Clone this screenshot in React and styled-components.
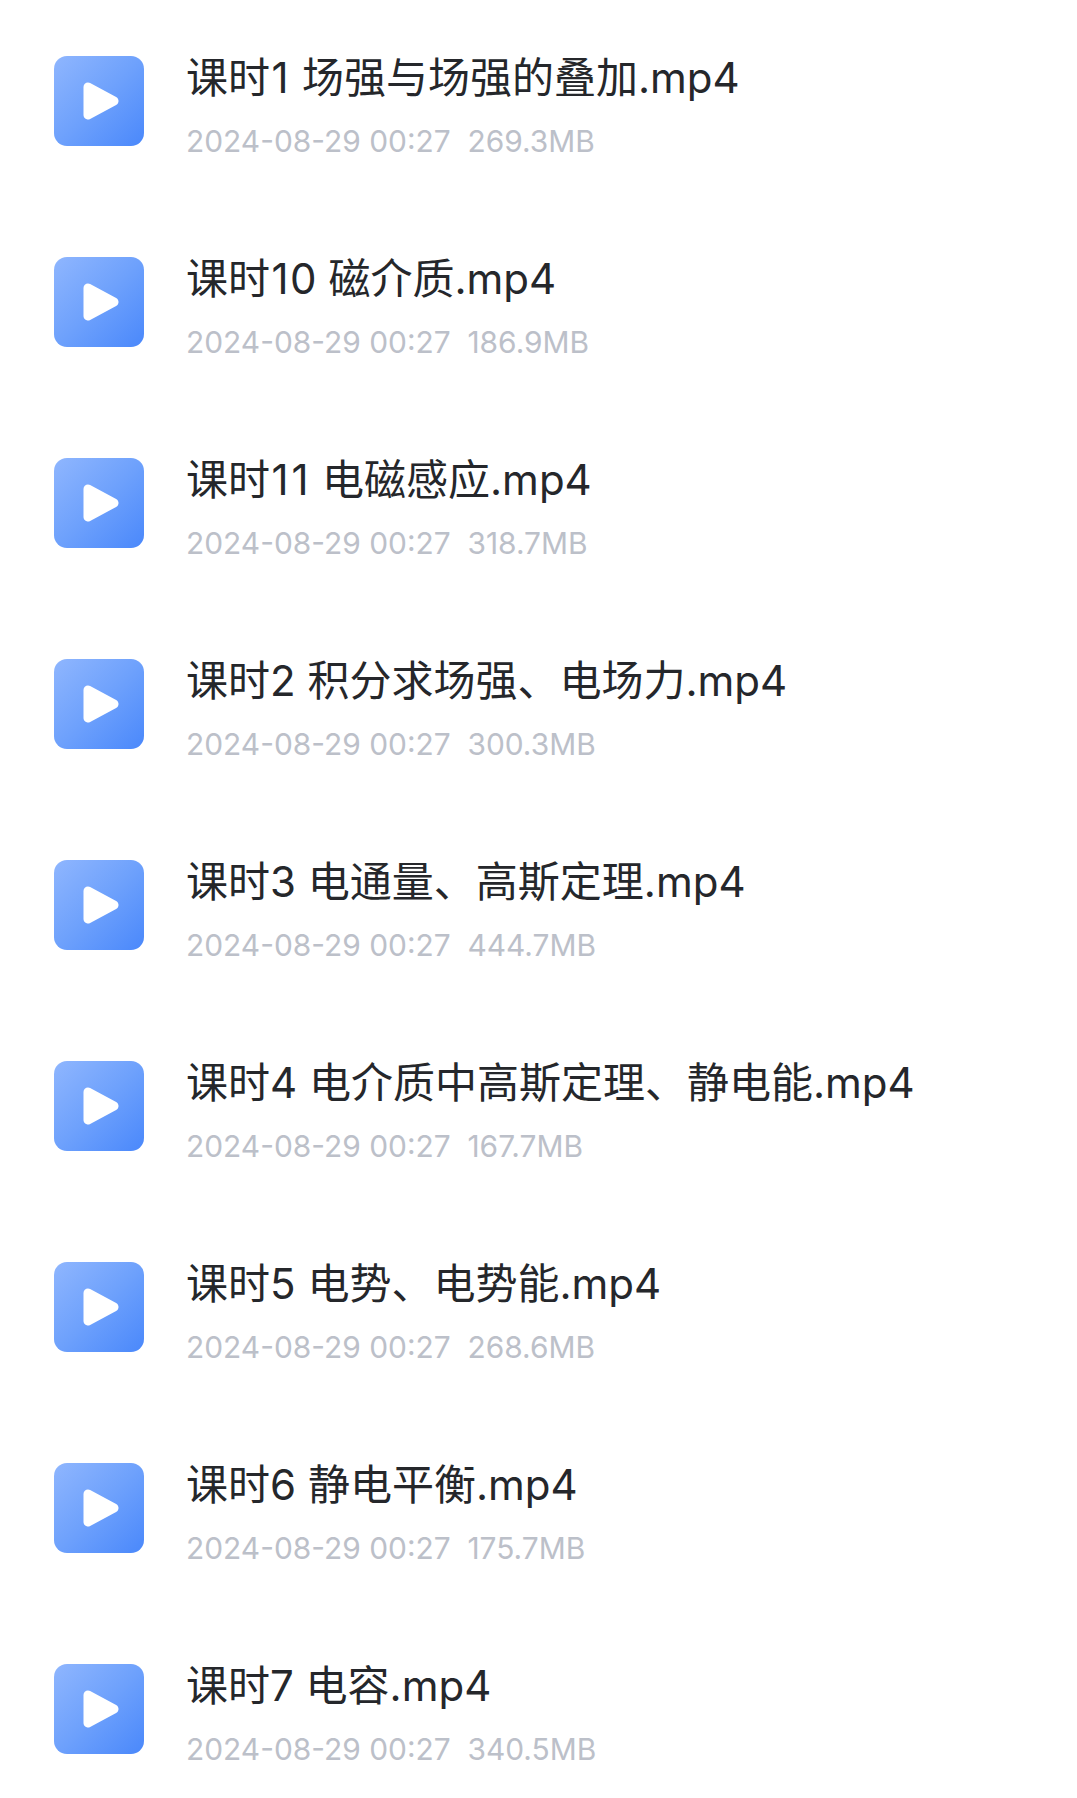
import React from 'react';
import styled, { createGlobalStyle } from 'styled-components';

const GlobalStyle = createGlobalStyle`
  html, body {
    margin: 0;
    padding: 0;
    background: #fff;
  }
`;

const List = styled.div`
  width: 1077px;
  height: 1798px;
  overflow: hidden;
  padding: 56px 0 0 54px;
  box-sizing: border-box;
  display: flex;
  flex-direction: column;
  gap: 111px;
`;

const Row = styled.div`
  display: flex;
  align-items: flex-start;
  gap: 42px;
  height: 90px;
`;

const IconBox = styled.div`
  width: 90px;
  height: 90px;
  border-radius: 13px;
  background: linear-gradient(135deg, #8fb6fe 0%, #6ea1fc 50%, #4a88fb 100%);
  display: flex;
  align-items: center;
  justify-content: center;
  flex-shrink: 0;
`;

const Info = styled.div`
  display: flex;
  flex-direction: column;
  gap: 20px;
  margin-top: -3px;
`;

const Title = styled.div`
  font-family: Inter, "Noto Sans CJK SC", sans-serif;
  font-size: 42px;
  line-height: 50px;
  color: #25272b;
  white-space: pre;
`;

/* Inter's 1 is narrower than the one in the screenshot */
const One = styled.span`
  padding: 0 1.5px;
`;

const Meta = styled.div`
  font-family: Inter, "Noto Sans", sans-serif;
  font-size: 29.9px;
  line-height: 36px;
  color: #bcc0c9;
  white-space: pre;
`;

const PlayIcon = () => (
  <svg width="36" height="38" viewBox="0 0 36 38" style={{ marginLeft: 3 }}>
    <path
      d="M5 5 L31 19 L5 33 Z"
      fill="#fff"
      stroke="#fff"
      strokeWidth="9"
      strokeLinejoin="round"
    />
  </svg>
);

const files = [
  ['课时', '1', ' 场强与场强的叠加.mp4', '269.3MB'],
  ['课时', '10', ' 磁介质.mp4', '186.9MB'],
  ['课时', '11', ' 电磁感应.mp4', '318.7MB'],
  ['课时', '2', ' 积分求场强、电场力.mp4', '300.3MB'],
  ['课时', '3', ' 电通量、高斯定理.mp4', '444.7MB'],
  ['课时', '4', ' 电介质中高斯定理、静电能.mp4', '167.7MB'],
  ['课时', '5', ' 电势、电势能.mp4', '268.6MB'],
  ['课时', '6', ' 静电平衡.mp4', '175.7MB'],
  ['课时', '7', ' 电容.mp4', '340.5MB'],
];

const LessonNumber = ({ value }) =>
  value.split('').map((d, i) => (d === '1' ? <One key={i}>1</One> : d));

export default function App() {
  return (
    <>
      <GlobalStyle />
      <List>
        {files.map(([label, num, name, size]) => (
          <Row key={num}>
            <IconBox>
              <PlayIcon />
            </IconBox>
            <Info>
              <Title>
                {label}
                <LessonNumber value={num} />
                {name}
              </Title>
              <Meta>{`2024-08-29 00:27  ${size}`}</Meta>
            </Info>
          </Row>
        ))}
      </List>
    </>
  );
}
